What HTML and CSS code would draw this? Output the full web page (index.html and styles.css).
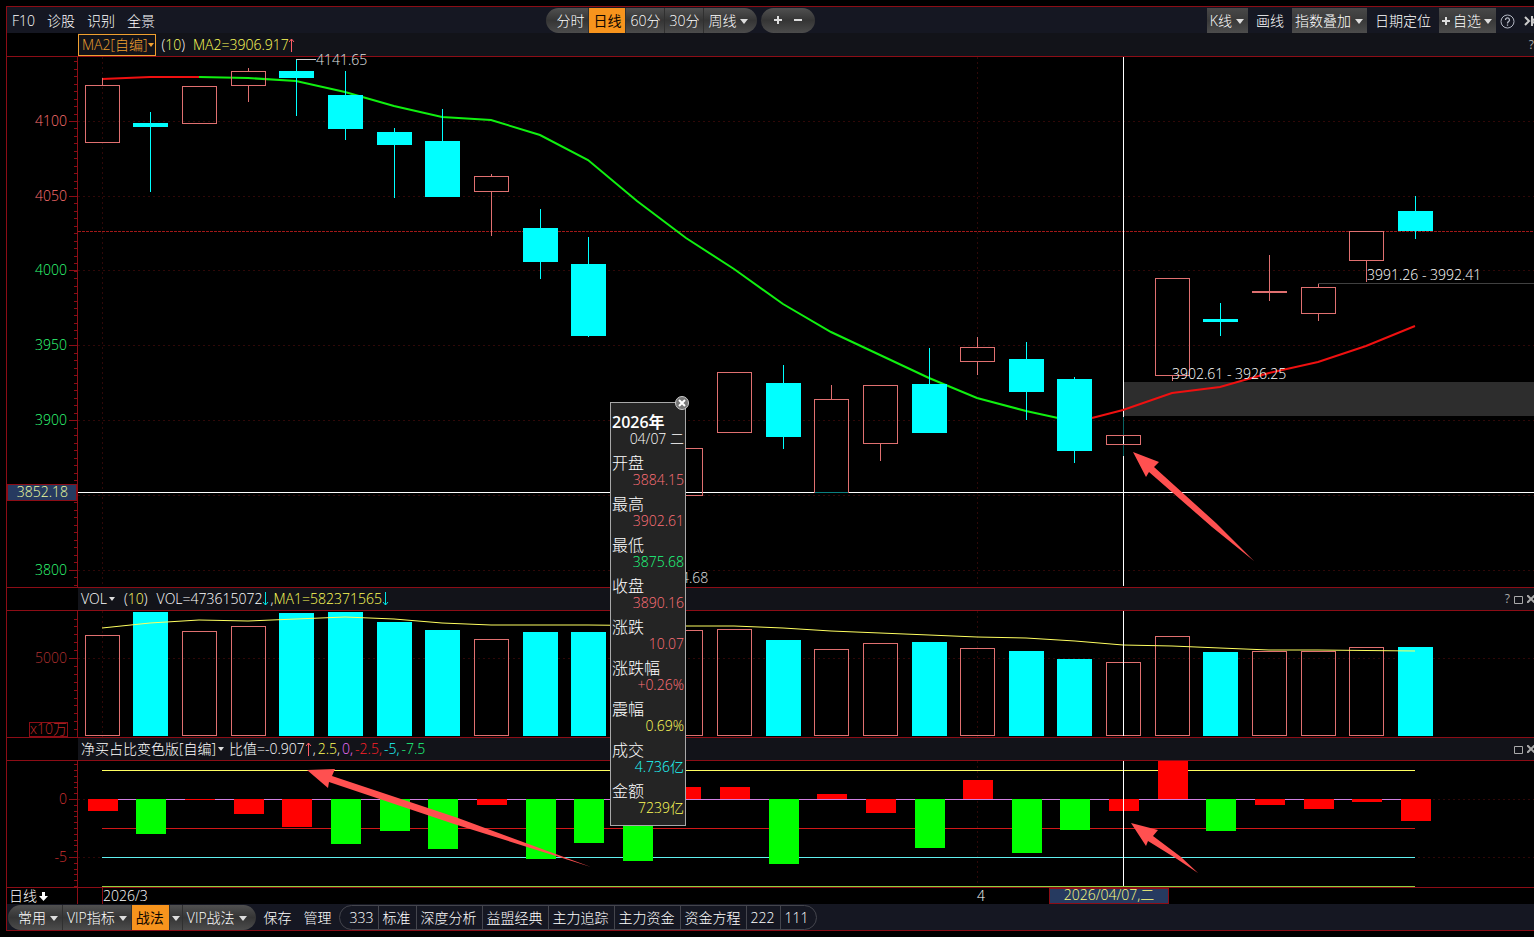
FILE: index.html
```html
<!DOCTYPE html>
<html lang="zh-CN">
<head>
<meta charset="utf-8">
<title>日线</title>
<link rel="stylesheet" href="styles.css">
</head>
<body>
<main class="app">
  <header class="topbar">
    <nav class="links">
      <button>F10</button><button>诊股</button><button>识别</button><button>全景</button>
    </nav>
    <div class="periods">
      <div class="pill">
        <button>分时</button><button class="active">日线</button><button>60分</button><button>30分</button><button class="menu">周线</button>
      </div>
      <div class="pill zoom">
        <button aria-label="放大"><svg width="8" height="8"><path d="M4 0v8M0 4h8" stroke="#ddd" stroke-width="2"/></svg></button>
        <button aria-label="缩小"><svg width="8" height="8"><path d="M0 4h8" stroke="#ddd" stroke-width="2"/></svg></button>
      </div>
    </div>
    <div class="tools">
      <button class="menu raised">K线</button>
      <button>画线</button>
      <button class="menu raised">指数叠加</button>
      <button>日期定位</button>
      <button class="menu raised add"><svg width="8" height="8"><path d="M4 0v8M0 4h8" stroke="#ddd" stroke-width="2"/></svg>自选</button>
      <button class="help" aria-label="帮助"><svg width="15" height="15" fill="none" stroke="#b4b8c4"><circle cx="7.5" cy="7.5" r="6.5"/><path d="M5.5 6a2 2 0 1 1 3 1.600q-1 .6-1 1.900M7.500 10.500v1.200" stroke-width="1.300"/></svg></button>
      <button class="collapse" aria-label="收起"><svg width="10" height="12" fill="none" stroke="#ccc" stroke-width="2"><path d="M1 2l4 4-4 4M8 1v10M10 4L8 6l2 2"/></svg></button>
    </div>
  </header>

  <section class="panel price">
    <div class="title">
      <div class="caption">
        <button class="menu boxed">MA2[自编]</button>
        <span class="params">(<b>10</b>)</span>
        <span class="yellow">MA2=3906.917</span><svg class="mark" width="6" height="14" fill="none" stroke="#ff5c66"><path d="M2.500 14V1M0 4l2.500-3L5 4"/></svg>
        <span class="actions"><button>?</button></span>
      </div>
    </div>
    <div class="body">
      <svg class="axis" id="price-axis"></svg>
      <svg class="plot" id="price-plot"></svg>
    </div>
  </section>

  <section class="panel volume">
    <div class="title">
      <div class="caption">
        <button class="menu">VOL</button>
        <span class="params">(<b>10</b>)</span>
        <span>VOL=473615072</span><svg class="mark" width="8" height="14" fill="none" stroke="#00e5e5"><path d="M3.500 0v13M1 10l2.500 3L6 10"/></svg><span>,</span><span class="yellow">MA1=582371565</span><svg class="mark" width="8" height="14" fill="none" stroke="#00e5e5"><path d="M3.500 0v13M1 10l2.500 3L6 10"/></svg>
        <span class="actions"><button>?</button><button aria-label="最大化"><svg width="9" height="9"><path d="M.5 1.500h8v7h-8z" fill="none" stroke="#aaa"/></svg></button><button aria-label="关闭"><svg width="7" height="8"><path d="M0 0l8 8M8 0L0 8" stroke="#aaa" stroke-width="2"/></svg></button></span>
      </div>
    </div>
    <div class="body">
      <svg class="axis" id="volume-axis"></svg>
      <svg class="plot" id="volume-plot"></svg>
    </div>
  </section>

  <section class="panel ratio">
    <div class="title">
      <div class="caption">
        <button class="menu">净买占比变色版[自编]</button>
        <span class="value">比值=-0.907</span><svg class="mark" width="8" height="14" fill="none" stroke="#ff5c66"><path d="M3.500 14V1M1 4l2.500-3L6 4"/></svg><span class="levels">,<i class="yellow">2.5</i>,<i class="violet">0,</i><i class="red">-2.5,</i><i class="cyan">-5,</i><i class="green">-7.5</i></span>
        <span class="actions"><button aria-label="最大化"><svg width="9" height="9"><path d="M.5 1.500h8v7h-8z" fill="none" stroke="#aaa"/></svg></button><button aria-label="关闭"><svg width="7" height="8"><path d="M0 0l8 8M8 0L0 8" stroke="#aaa" stroke-width="2"/></svg></button></span>
      </div>
    </div>
    <div class="body">
      <svg class="axis" id="ratio-axis"></svg>
      <svg class="plot" id="ratio-plot"></svg>
    </div>
  </section>

  <div class="dates">
    <button class="period">日线<svg width="9" height="9"><path d="M4.500 0v5" stroke="#fff" stroke-width="3"/><path d="M0 4h9L4.500 9z" fill="#fff"/></svg></button>
    <svg class="plot" id="date-plot"></svg>
  </div>

  <footer class="bottombar">
    <div class="pill groups">
      <button class="menu">常用</button><button class="menu">VIP指标</button><button class="active">战法</button><button class="menu bare" aria-label="更多战法"></button><button class="menu">VIP战法</button>
    </div>
    <button>保存</button>
    <button>管理</button>
    <nav class="tabs">
      <button>333</button><button>标准</button><button>深度分析</button><button>益盟经典</button><button>主力追踪</button><button>主力资金</button><button>资金方程</button><button>222</button><button>111</button>
    </nav>
  </footer>

  <aside class="quote">
    <button class="close" aria-label="关闭"><svg width="14" height="14"><circle cx="7" cy="7" r="6.500" fill="#777" stroke="#ccc"/><path d="M4 4l6 6M10 4l-6 6" stroke="#fff" stroke-width="2"/></svg></button>
    <dl>
      <dt class="year">2026年</dt><dd>04/07 二</dd>
      <dt>开盘</dt><dd class="up">3884.15</dd>
      <dt>最高</dt><dd class="up">3902.61</dd>
      <dt>最低</dt><dd class="green">3875.68</dd>
      <dt>收盘</dt><dd class="up">3890.16</dd>
      <dt>涨跌</dt><dd class="up">10.07</dd>
      <dt>涨跌幅</dt><dd class="up">+0.26%</dd>
      <dt>震幅</dt><dd class="yellow">0.69%</dd>
      <dt>成交</dt><dd class="cyan">4.736亿</dd>
      <dt>金额</dt><dd class="yellow">7239亿</dd>
    </dl>
  </aside>
</main>
<script src="chart.js"></script>
</body>
</html>
```

FILE: styles.css
```css
* { box-sizing: border-box; }

body {
  margin: 0;
  background: #000;
  color: #fff;
  font: 300 14px/20px "Open Sans", "Noto Sans CJK SC", sans-serif;
}

button {
  margin: 0;
  padding: 0;
  border: 0;
  background: none;
  color: inherit;
  font: inherit;
  white-space: nowrap;
}

svg { display: block; flex: none; }
i { font-style: normal; }
b { font-weight: 300; color: #ffff66; }

.yellow { color: #ffff5a; }
.violet { color: #f070ff; }
.red { color: #ff2028; }
.cyan { color: #20ffff; }
.green { color: #20ff80; }
.up { color: #ff7078; }

.app {
  position: relative;
  display: flex;
  flex-direction: column;
  min-height: 100vh;
  padding: 6px 0 6px 6px;
  overflow: hidden;
}

.topbar, .bottombar {
  display: flex;
  align-items: center;
  height: 27px;
  background: #151722;
  border-left: 1px solid #8c0d16;
}
.topbar { justify-content: space-between; border-top: 1px solid #8c0d16; }
.bottombar { border-bottom: 1px solid #8c0d16; }
.topbar button, .bottombar button { padding-top: 2px; }

.links { display: flex; gap: 12px; padding-left: 5px; }

.menu { display: flex; align-items: center; gap: 4px; }
.menu::after {
  content: "";
  border: 4px solid transparent;
  border-top: 5px solid #ddd;
  border-bottom: 0;
}

.periods { display: flex; gap: 4px; }
.pill {
  display: flex;
  height: 25px;
  overflow: hidden;
  border-radius: 13px;
  background: linear-gradient(#505050, #353535 50%, #4c4c4c);
}
.pill button { padding-right: 5px; padding-left: 4px; border-right: 1px solid #303030; }
.periods .pill button { padding-right: 4px; }
.pill button:first-child { padding-left: 10px; }
.periods .pill button:last-child, .pill button:last-child { padding-right: 9px; border-right: 0; }
.pill .active { background: #f7941d; color: #100800; font-weight: 400; }
.periods .zoom { width: 54px; align-items: center; }
.periods .zoom button { border: 0; padding: 0 6px; }
.periods .zoom button:first-child { padding-left: 13px; }

.tools { display: flex; align-items: center; gap: 8px; }
.raised {
  height: 25px;
  padding-right: 4px;
  padding-left: 3px;
  background: linear-gradient(#484848, #3a3a3a 50%, #4c4c4c);
}
.add { gap: 3px; }
.help { margin-left: -4px; }
.collapse { margin-left: 1px; }

.title {
  display: flex;
  height: 24px;
  padding-left: 71px;
  border: solid #8c0d16;
  border-width: 1px 0 1px 1px;
}
.price .title { border-top: 0; }
.caption {
  display: flex;
  flex: 1;
  align-items: center;
  background: #121319;
}
.caption > .menu { gap: 2px; padding-left: 3px; }
.caption > .menu::after { border-width: 4px 3px 0; }
.caption > .boxed {
  gap: 1px;
  height: 22px;
  padding: 0 1px 0 3px;
  border: 1px solid #f0a030;
  color: #f0a030;
}
.caption > .boxed::after { border-top-color: #f0a030; }
.params { margin: 0 9px; }
.boxed + .params { margin: 0 8px 0 5px; }
.value { margin-left: 5px; }
.levels i { margin-left: 2px; }
.actions { display: flex; gap: 4px; align-items: center; margin-left: auto; color: #aaa; font-size: 12px; font-weight: 400; }

.body { display: flex; height: 126px; }
.price { display: flex; flex: 1; flex-direction: column; }
.price .body { flex: 1; min-height: 530px; }
.axis { width: 72px; height: auto; border: solid #8c0d16; border-width: 0 1px; }
.plot { flex: 1; min-width: 0; height: auto; overflow: visible; }
text { font-size: 14px; }

.dates {
  display: flex;
  height: 17px;
  border: solid #8c0d16;
  border-width: 1px 0 0 1px;
}
.period {
  display: flex;
  align-items: center;
  gap: 2px;
  width: 71px;
  padding-left: 2px;
  border-right: 1px solid #8c0d16;
}

.bottombar > button { margin-left: 12px; }
.bottombar > .groups + button { margin-left: 8px; }
.groups { margin-left: 1px; }
.groups .menu { padding-right: 4px; }
.groups .menu:last-child { padding-right: 9px; }
.groups .bare { padding-right: 2px; padding-left: 2px; gap: 0; }
.tabs {
  display: flex;
  margin-left: 7px;
  height: 25px;
  border: 1px solid #44454d;
  border-radius: 13px;
  overflow: hidden;
}
.tabs button { padding-right: 5px; padding-left: 4px; border-left: 1px solid #44454d; }
.tabs button:first-child { padding-right: 4px; padding-left: 10px; border-left: 0; }
.tabs button:last-child { padding-right: 7px; }

.quote {
  position: absolute;
  left: 610px;
  top: 402px;
  width: 76px;
  height: 424px;
  padding: 9px 1px 0;
  border: 1px solid #a8a8a8;
  background: #242424;
}
.close { position: absolute; right: -4px; top: -7px; }
.quote dl { margin: 0; }
.quote dt { font-size: 16px; line-height: 20px; white-space: nowrap; color: #fff; }
.quote .year { font-weight: 600; }
.quote dd { height: 21px; margin: 0; line-height: 14px; text-align: right; white-space: nowrap; }
```

FILE: chart.js
```js
const FIRST = 24, STEP = 48.63, FAR = 4000;
const FRAME = '#8c0d16', UP = '#e07070', DOWN = '#00ffff', GRID = '#300808';
const center = i => Math.floor(FIRST + STEP * i + .35);

const rect = (x, y, w, h, fill) => `<rect x="${x}" y="${y}" width="${w}" height="${h}" fill="${fill}"/>`;
const box = (x, y, w, h, color) => `<rect x="${x + .5}" y="${y + .5}" width="${w - 1}" height="${h - 1}" fill="none" stroke="${color}"/>`;
const vline = (x, y1, y2, color, extra = '') => `<path d="M${x + .5} ${y1}V${y2}" stroke="${color}" ${extra}/>`;
const hline = (y, x1, x2, color, extra = '') => `<path d="M${x1} ${y + .5}H${x2}" stroke="${color}" ${extra}/>`;
const text = (x, y, value, color, anchor = 'start') => `<text x="${x}" y="${y}" fill="${color}" text-anchor="${anchor}">${value}</text>`;
const poly = (points, color, width) => `<polyline points="${points}" fill="none" stroke="${color}" stroke-width="${width}"/>`;
const arrow = points => `<polygon points="${points}" fill="#ff5050"/>`;
const dots = 'stroke-dasharray="2 3"';
const draw = (id, parts) => { document.getElementById(id).innerHTML = parts.join(''); };

function ticks(origin, step, height) {
  const out = [];
  for (let y = origin - Math.floor(origin / step) * step; y < height; y += step) out.push(hline(Math.round(y), 67, 70, FRAME));
  return out;
}

/* Candles: direction, body top, body bottom, high, low */
const candles = [
  ['u', 28, 86, 21, 86], ['d', 66, 70, 55, 135], ['u', 29, 67, 29, 67], ['u', 14, 29, 11, 45],
  ['d', 14, 21, 2, 59], ['d', 38, 72, 14, 83], ['d', 75, 88, 71, 141], ['d', 84, 140, 52, 140],
  ['u', 119, 135, 117, 179], ['d', 171, 205, 152, 222], ['d', 207, 279, 180, 280], null,
  ['u', 391, 439, 391, 525], ['u', 315, 376, 315, 376], ['d', 326, 380, 308, 392], ['u', 342, 436, 328, 436],
  ['u', 328, 387, 328, 404], ['d', 327, 376, 291, 376], ['u', 290, 305, 280, 318], ['d', 302, 335, 285, 363],
  ['d', 322, 394, 320, 406], ['u', 378, 388, 378, 388], ['u', 221, 319, 221, 324], ['d', 262, 265, 246, 279],
  ['u', 234, 236, 198, 244], ['u', 230, 257, 227, 264], ['u', 174, 204, 174, 225], ['d', 154, 174, 139, 182]
];

const price = [
  rect(1045, 325, FAR, 34, '#2d2d2d'),
  ...[64, 139, 213, 288, 363, 438, 513].map(y => hline(y, 0, FAR, GRID, dots)),
  vline(24, 0, 530, GRID, dots), vline(899, 0, 530, GRID, dots),
  hline(174, 0, FAR, '#a01818', 'stroke-dasharray="3 1"'),
  hline(226, 1240, FAR, '#404040'),
  hline(435, 0, FAR, '#fff'), vline(1045, 0, 529, '#fff'),
  poly('121,20 170,21 218,24 267,35 316,49 364,60 413,63 462,78 510,103 559,144 608,181 656,212 705,247 753,275 802,298 851,321 899,341 948,354 980,361', '#10f010', 2),
  poly('24,22 72,20 121,20', '#f01010', 2)
];
candles.forEach((c, i) => {
  if (!c) return;
  const [kind, top, bottom, high, low] = c, x = center(i), color = kind === 'u' ? UP : DOWN;
  if (high < top) price.push(vline(x, high, top, color));
  if (low > bottom) price.push(vline(x, bottom, low, color));
  price.push(kind === 'u' ? box(x - 17, top, 35, bottom - top, color) : rect(x - 17, top, 35, bottom - top, color));
});
price.push(
  poly('1014,361 1045,353 1094,336 1142,330 1191,316 1240,305 1288,289 1337,269', '#f01010', 2),
  vline(1045, 360, 378, '#0b6464'), vline(1045, 388, 399, '#0b6464'),
  hline(435, 737, 770, '#0b8080'),
  hline(2, 218, 238, '#d0d0d0'),
  text(238, 8, '4141.65', '#e0e0e0'), text(603, 526, '4.68', '#e0e0e0'),
  text(1289, 223, '3991.26 - 3992.41', '#fff'), text(1094, 322, '3902.61 - 3926.25', '#fff'),
  arrow('1055,395 1081,405 1076,410 1138,466 1176,504 1134,470 1071,415 1068,420')
);
draw('price-plot', price);

const labels = [['4100', 64], ['4050', 139], ['4000', 213], ['3950', 288], ['3900', 363], ['3800', 513]];
draw('price-axis', [
  ...ticks(64, 7.48, 530),
  ...labels.map(([v, y], i) => hline(y, 62, 70, FRAME) + text(60, y + 5, v, i < 2 ? '#ff7070' : '#30ff78', 'end')),
  rect(0, 427, 70, 16, '#263a60'), box(0, 427, 70, 17, FRAME),
  text(61, 440, '3852.18', '#f0ffa0', 'end')
]);

/* Volume bar tops, coloured by candle direction */
const volumes = [24, 1, 20, 15, 2, 1, 11, 19, 28, 21, 21, null, 19, 18, 29, 38, 32, 31, 37, 40, 48, 51, 25, 41, 40, 40, 36, 36];
const volume = [hline(47, 0, FAR, GRID, dots), vline(24, 0, 126, GRID, dots), vline(899, 0, 126, GRID, dots)];
volumes.forEach((top, i) => {
  if (top === null) return;
  const x = center(i) - 17;
  volume.push(candles[i][0] === 'u' ? box(x, top, 35, 125 - top, UP) : rect(x, top, 35, 125 - top, DOWN));
});
volume.push(
  poly('24,17 72,12 121,9 170,10 218,8 267,6 316,8 364,12 413,14 510,14 608,15 656,15 705,17 753,20 802,22 851,24 899,26 948,27 997,30 1045,34 1094,35 1142,37 1191,39 1240,39 1337,40', '#ffff60', 1),
  vline(1045, 0, 125, '#fff')
);
draw('volume-plot', volume);
draw('volume-axis', [
  ...ticks(47, 7.9, 126), hline(47, 62, 70, FRAME), text(60, 52, '5000', '#b03030', 'end'),
  box(22, 111, 39, 15, FRAME), text(60, 123, 'x10万', '#c02828', 'end')
]);

/* Ratio bars: colour, end of the bar; the baseline is at 38 */
const ratios = [
  ['r', 50], ['g', 73], ['r', 39], ['r', 53], ['r', 66], ['g', 83], ['g', 70], ['g', 88], ['r', 44], ['g', 98],
  ['g', 82], ['g', 100], ['r', 26], ['r', 26], ['g', 103], ['r', 33], ['r', 52], ['g', 87], ['r', 19], ['g', 92],
  ['g', 69], ['r', 50], ['r', 0], ['g', 70], ['r', 44], ['r', 48], ['r', 41], ['r', 60]
];
const ratio = [
  hline(38, 0, FAR, GRID, dots), hline(96, 0, FAR, GRID, dots), vline(899, 0, 126, GRID, dots),
  hline(9, 24, 1337, '#ffff60'), hline(38, 24, 1337, '#d080e0'), hline(67, 24, 1337, '#d01818'),
  hline(96, 24, 1337, '#60f0f0'), hline(125, 24, 1337, '#90d040')
];
ratios.forEach(([kind, end], i) => {
  ratio.push(rect(center(i) - 14, Math.min(end, 38), 30, Math.abs(end - 38), kind === 'r' ? '#ff0000' : '#00ff00'));
});
ratio.push(
  vline(1045, 0, 125, '#fff'),
  arrow('1053,62 1080,69 1075,75 1103,96 1120,112 1099,98 1070,80 1068,85'),
  arrow('229,9 257,8 254,15 380,57 513,106 376,63 251,21 250,27')
);
draw('ratio-plot', ratio);
draw('ratio-axis', [
  ...ticks(38, 5.8, 126),
  hline(38, 62, 70, FRAME), hline(96, 62, 70, FRAME),
  text(60, 43, '0', '#d03030', 'end'), text(60, 101, '-5', '#d03030', 'end')
]);

draw('date-plot', [
  vline(24, 0, 16, FRAME), text(25, 13, '2026/3', '#fff'), text(899, 13, '4', '#fff'),
  rect(971, 0, 120, 16, '#263a60'), box(971, 0, 120, 16, FRAME),
  text(1031, 12, '2026/04/07,二', '#ffff80', 'middle')
]);
```
